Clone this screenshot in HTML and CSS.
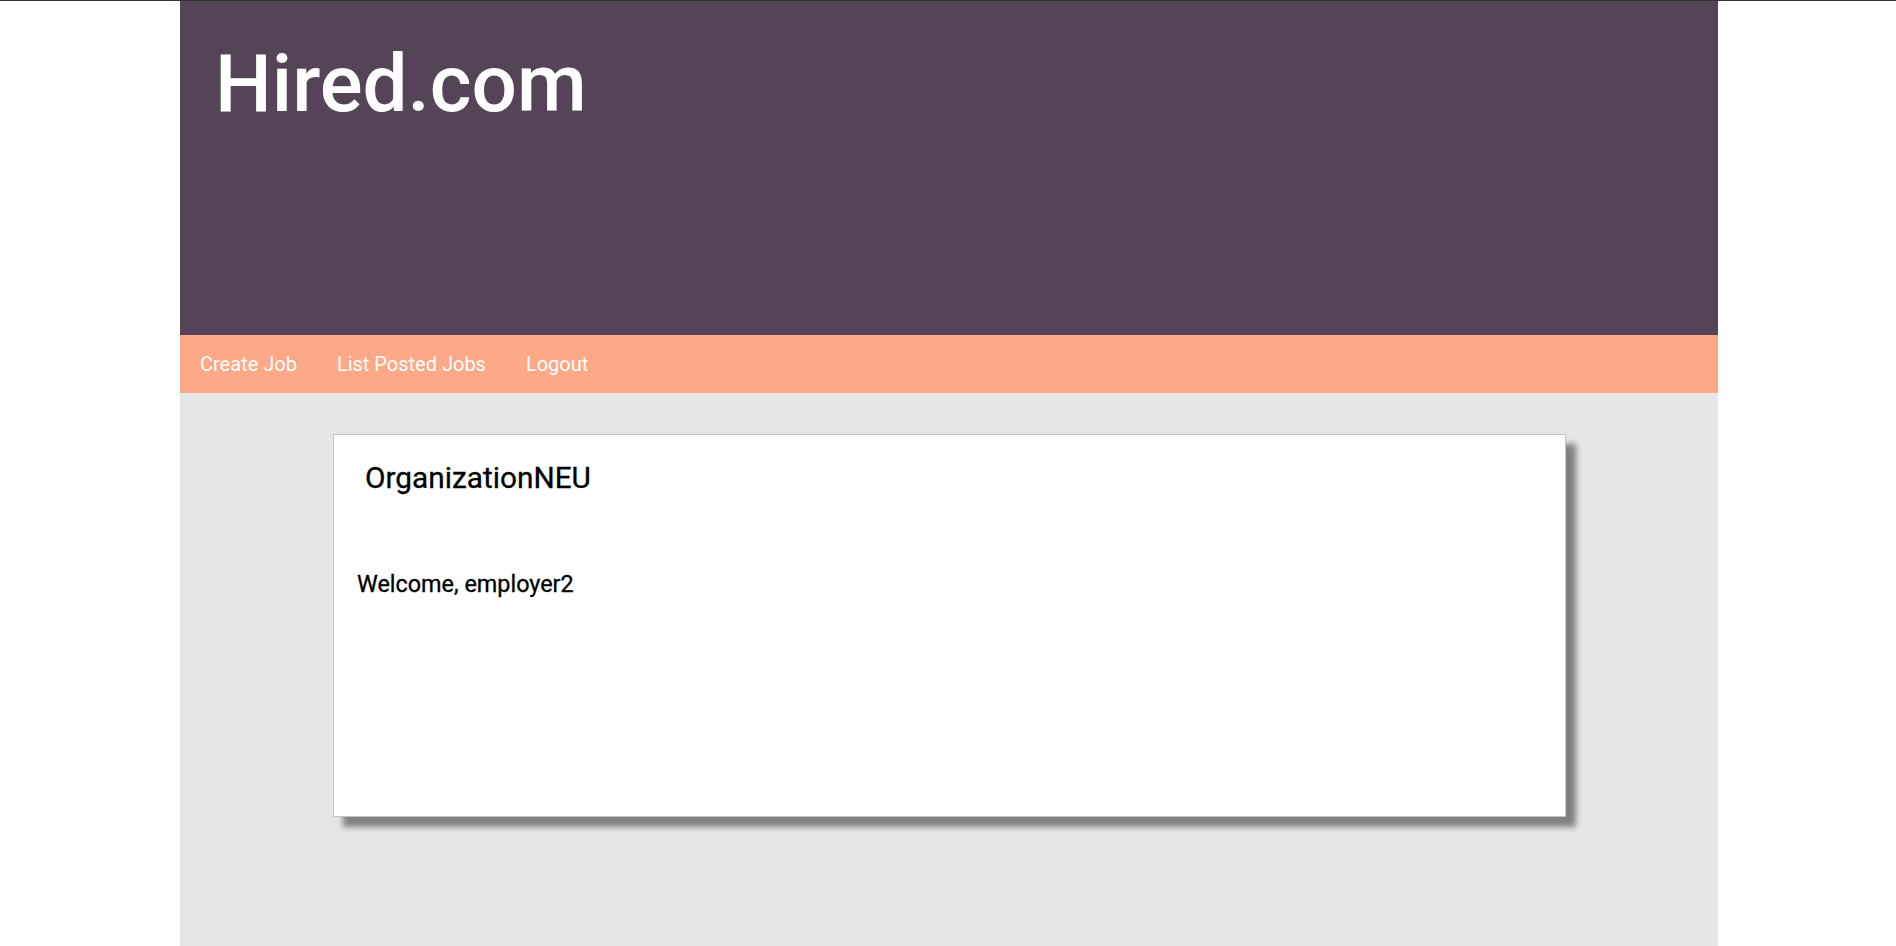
FILE: index.html
```html
<!DOCTYPE html>
<html lang="en">
<head>
<meta charset="utf-8">
<title>Hired.com</title>
<link rel="stylesheet" href="styles.css">
</head>
<body>
<div class="page">
  <header class="banner">
    <h1 class="brand">Hired.com</h1>
  </header>
  <nav class="menu">
    <a class="menu-link" href="#">Create Job</a>
    <a class="menu-link" href="#">List Posted Jobs</a>
    <a class="menu-link" href="#">Logout</a>
  </nav>
  <main class="content">
    <section class="card">
      <h2 class="card-title">OrganizationNEU</h2>
      <p class="welcome">Welcome, employer2</p>
    </section>
  </main>
</div>
</body>
</html>
```

FILE: styles.css
```css
html, body {
  margin: 0;
  padding: 0;
}
body {
  background: #ffffff;
  border-top: 1px solid #333333;
  padding-left: 2px;
  font-family: Roboto, "Liberation Sans", sans-serif;
  height: 945px;
  overflow: hidden;
}
.page {
  width: 1538px;
  margin: 0 auto;
  display: flex;
  flex-direction: column;
  height: 100%;
}
.banner {
  background: #554457;
  height: 334px;
  box-sizing: border-box;
  padding: 37px 35px 0;
}
.brand {
  margin: 0;
  color: #ffffff;
  font-size: 80px;
  font-weight: 500;
  line-height: 1.172;
}
.menu {
  background: #fda886;
  height: 58px;
  box-sizing: border-box;
  padding: 18px 20px 0;
  display: flex;
  gap: 40px;
}
.menu-link {
  color: #ffffff;
  text-decoration: none;
  font-size: 20px;
  line-height: 1.172;
}
.content {
  background: #e6e6e6;
  flex: 1;
  padding: 41px 152px 0 153px;
}
.card {
  background: #ffffff;
  border: 1px solid #c4c4c4;
  height: 383px;
  box-sizing: border-box;
  padding: 0 23px;
  box-shadow: 10px 10px 6px #808080;
  overflow: hidden;
}
.card-title {
  margin: 26px 0 0 8px;
  font-size: 29.8px;
  font-weight: 400;
  line-height: 1.172;
  color: #000000;
  -webkit-text-stroke: 0.3px #000000;
}
.welcome {
  margin: 75px 0 0;
  font-size: 23.4px;
  font-weight: 400;
  line-height: 1.172;
  color: #000000;
  -webkit-text-stroke: 0.3px #000000;
}
```
